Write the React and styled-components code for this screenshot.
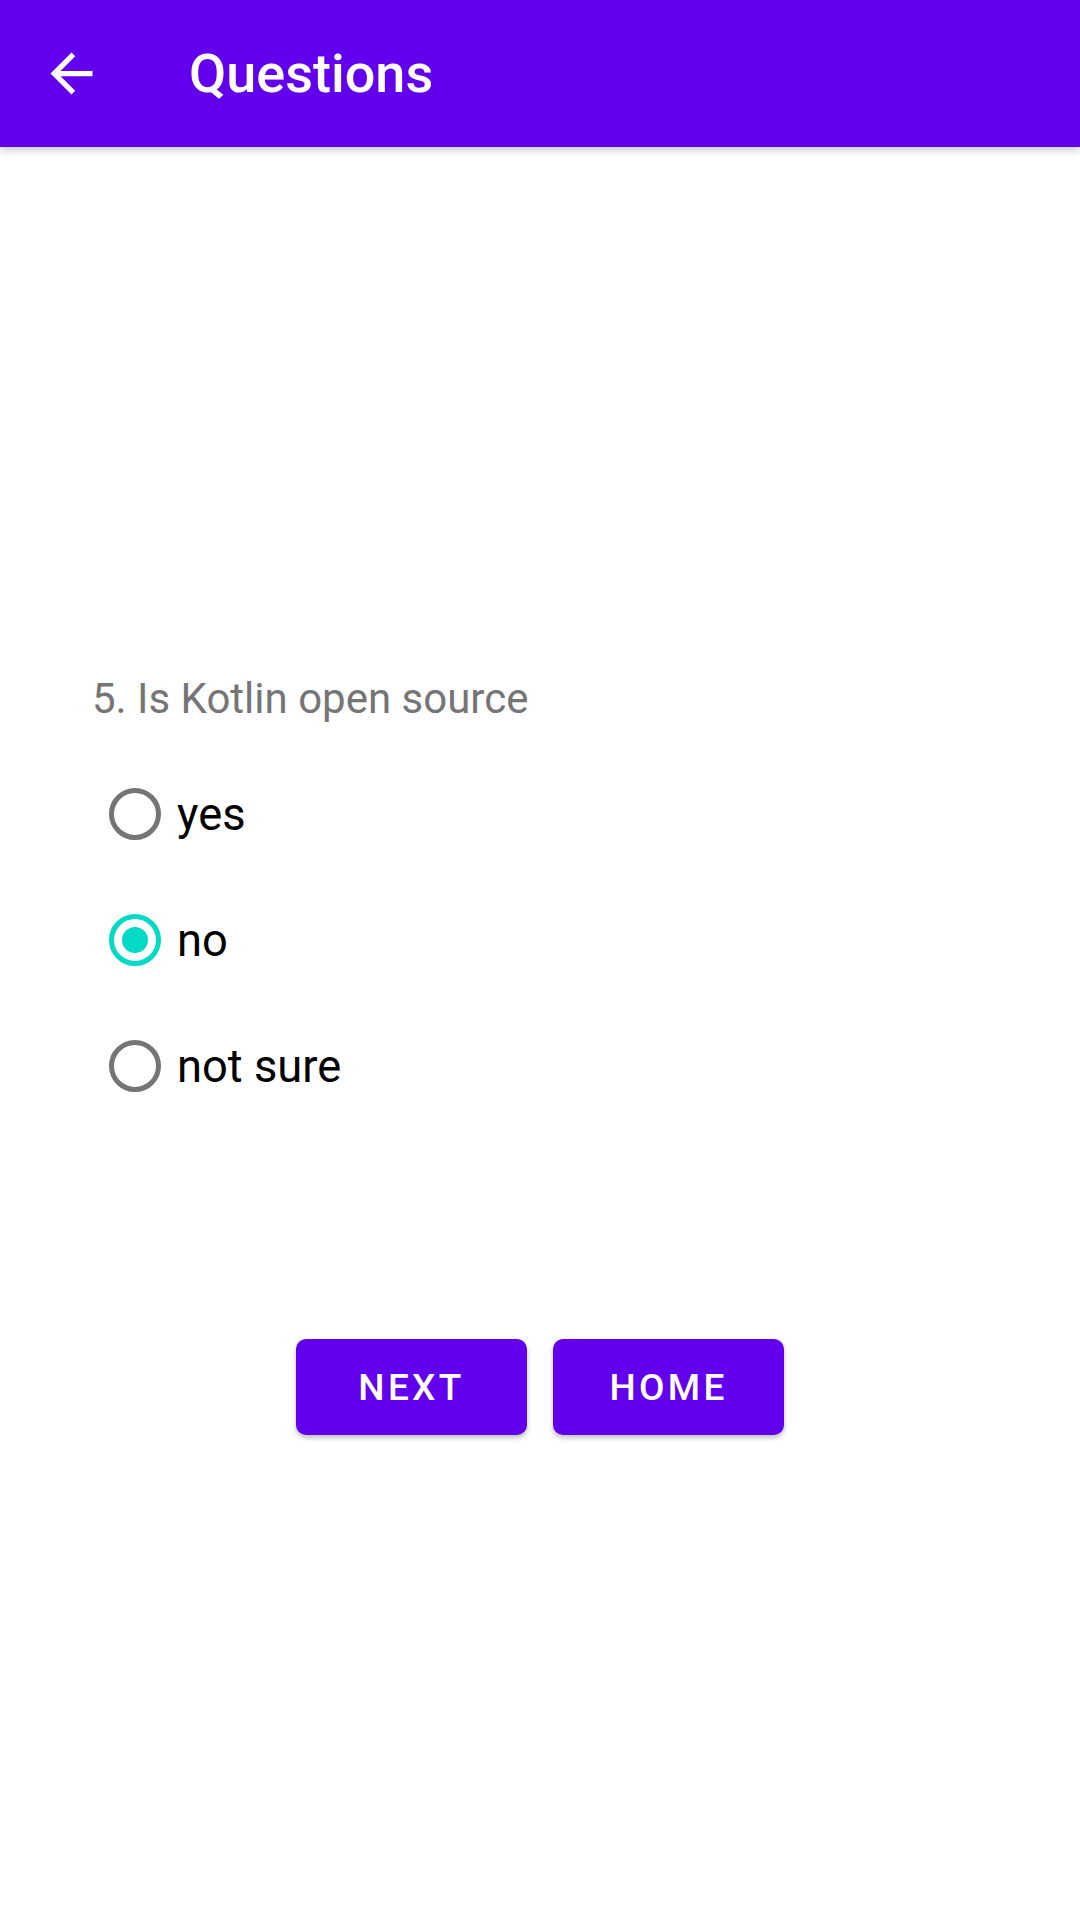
import React from "react";
import styled, { createGlobalStyle } from "styled-components";

const GlobalStyle = createGlobalStyle`
    html, body {
        margin:0;
        padding:0;
        background:#fff;
        font-family:Roboto, "Noto Sans", sans-serif;
    }
`;

const Screen = styled.div`
    width:1080px;
    min-height:1920px;
    background:#fff;
`;

const AppBar = styled.header`
    height:147px;
    background:#6200ee;
    display:flex;
    align-items:center;
    box-shadow:0 3px 8px rgba(0,0,0,0.22);
    position:relative;
`;

const BackButton = styled.button`
    width:63px;
    height:63px;
    margin-left:40px;
    padding:0;
    border:none;
    background:none;
    display:flex;
    color:#fff;
`;

const Title = styled.h1`
    margin:0 0 0 86px;
    font-size:54px;
    font-weight:500;
    line-height:1;
    color:#fff;
`;

const Content = styled.main`
    padding:527px 0 0 92px;
`;

const Question = styled.p`
    margin:0 0 28px;
    font-size:42px;
    line-height:49px;
    color:#757575;
`;

const Options = styled.div`
    display:flex;
    flex-direction:column;
    margin-left:17px;
`;

const Option = styled.label`
    height:126px;
    display:flex;
    align-items:center;
    gap:16px;
    font-size:45.3px;
    color:#000;
`;

const Radio = styled.span`
    width:52px;
    height:52px;
    box-sizing:border-box;
    border-radius:50%;
    border:5px solid ${props => props.checked ? "#03dac5" : "#757575"};
    display:flex;
    align-items:center;
    justify-content:center;

    &::after {
        content:"";
        width:26px;
        height:26px;
        border-radius:50%;
        background:#03dac5;
        display:${props => props.checked ? "block" : "none"};
    }
`;

const ButtonRow = styled.div`
    display:flex;
    justify-content:center;
    gap:26px;
    margin-top:210px;
`;

const Button = styled.button`
    width:231px;
    height:96px;
    border:none;
    border-radius:10px;
    background:#6200ee;
    color:#fff;
    font-family:Roboto, sans-serif;
    font-size:37px;
    font-weight:500;
    letter-spacing:3.3px;
    box-shadow:0 3px 5px rgba(0,0,0,0.25);
`;

const options = [
    { label: "yes", checked: false },
    { label: "no", checked: true },
    { label: "not sure", checked: false },
];

const App = () => (
    <Screen>
        <GlobalStyle />
        <AppBar>
            <BackButton aria-label="back">
                <svg width="63" height="63" viewBox="0 0 24 24" fill="currentColor">
                    <path d="M20 11H7.83l5.59-5.59L12 4l-8 8 8 8 1.41-1.41L7.83 13H20v-2z" />
                </svg>
            </BackButton>
            <Title>Questions</Title>
        </AppBar>
        <Content>
            <Question>5. Is Kotlin open source</Question>
            <Options>
                {options.map(opt => (
                    <Option key={opt.label}>
                        <Radio checked={opt.checked} />
                        {opt.label}
                    </Option>
                ))}
            </Options>
        </Content>
        <ButtonRow>
            <Button>NEXT</Button>
            <Button>HOME</Button>
        </ButtonRow>
    </Screen>
);

export default App;
